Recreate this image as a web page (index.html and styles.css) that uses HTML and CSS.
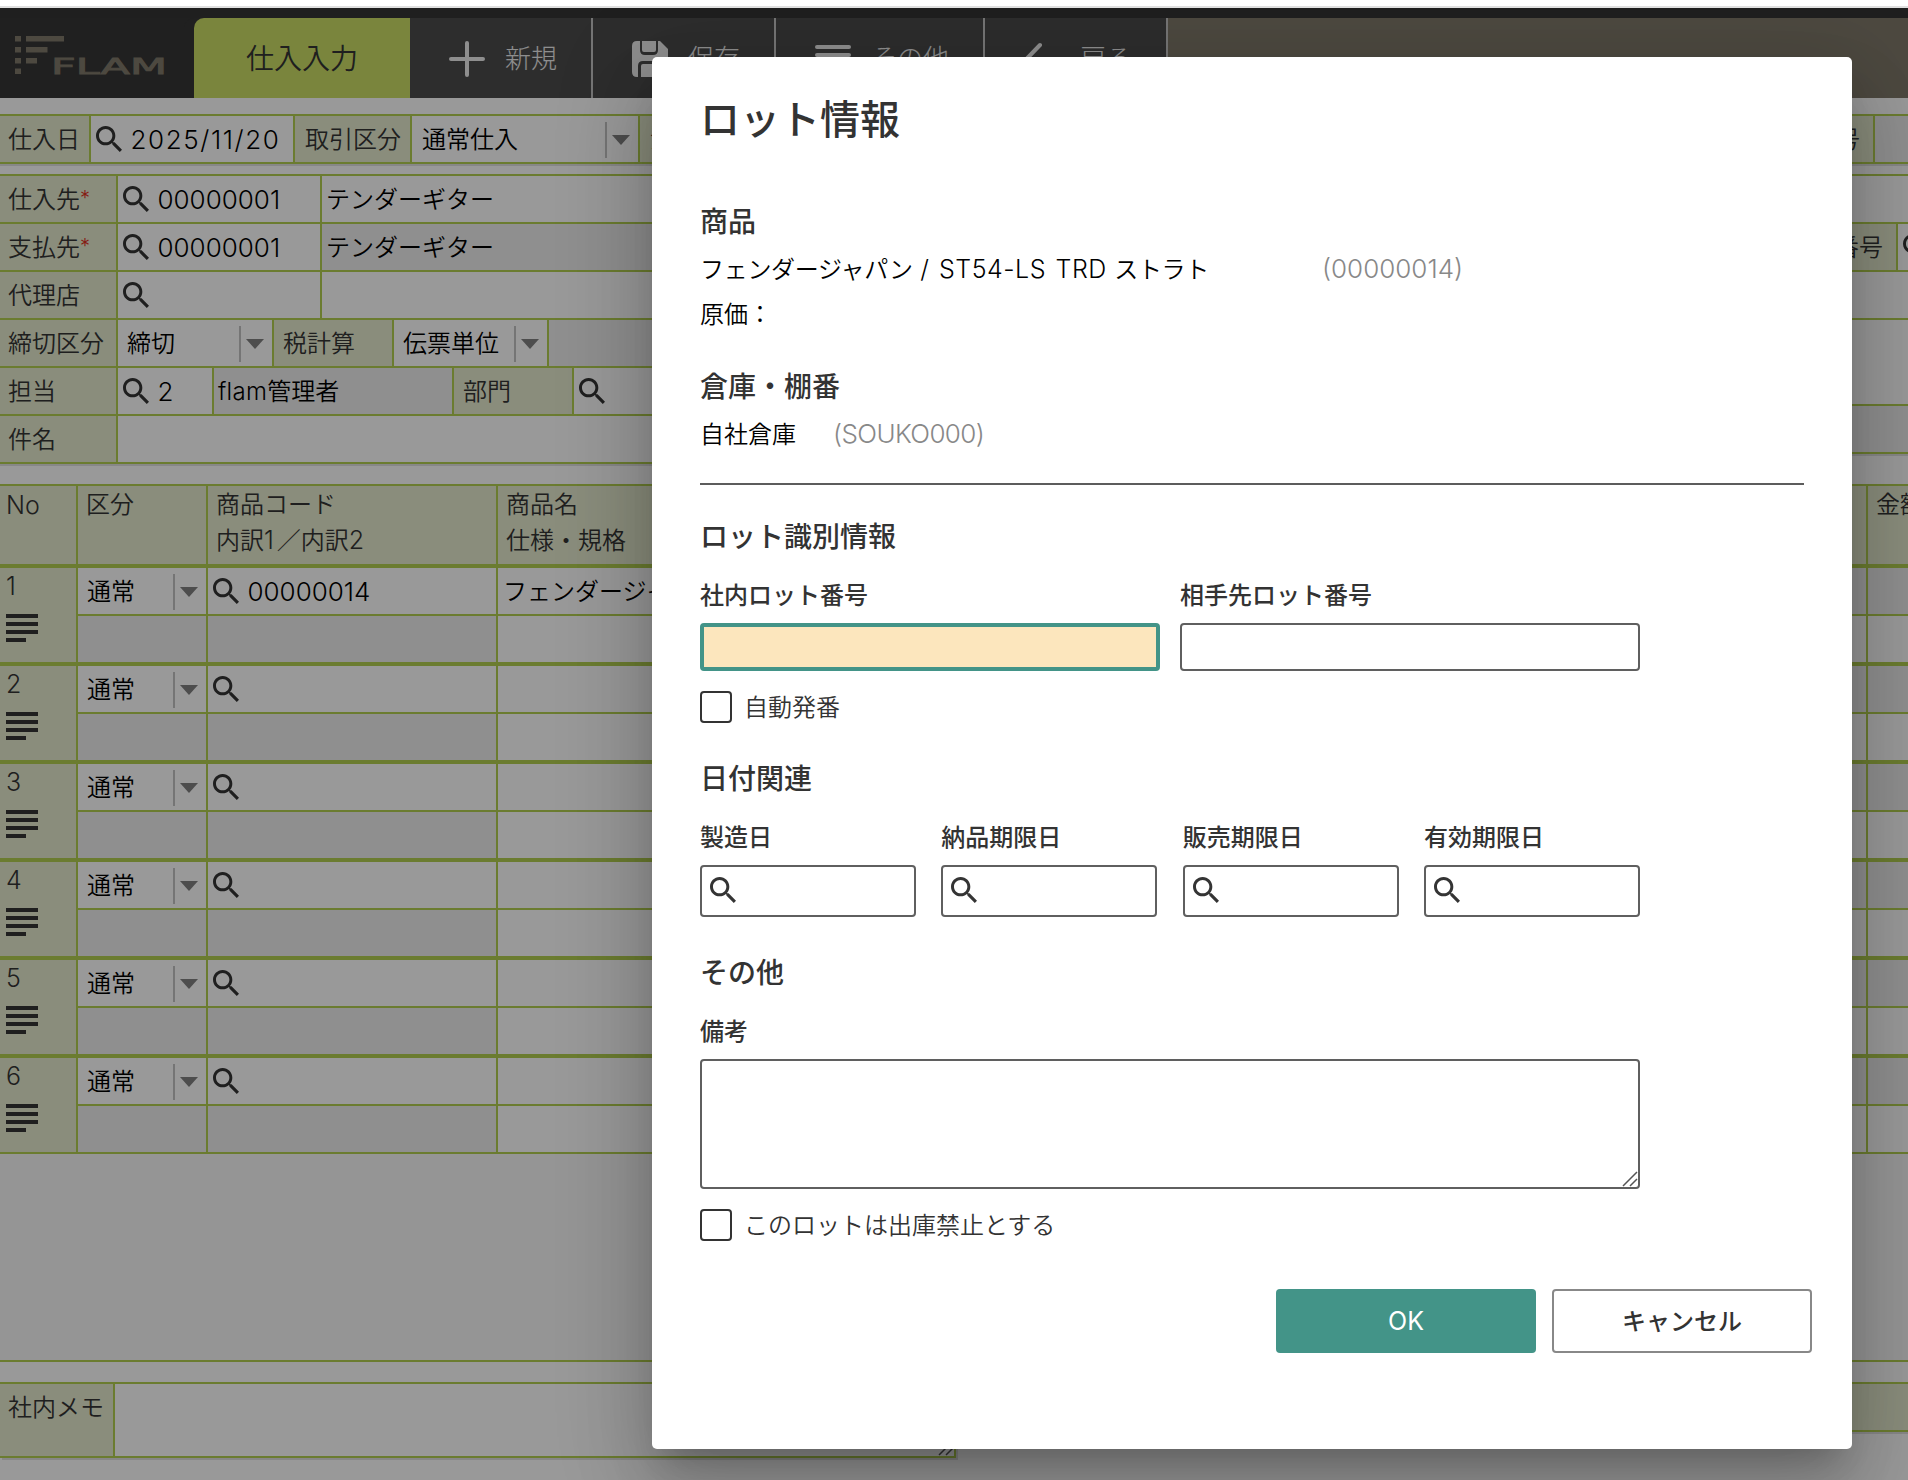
FILE: index.html
```
<!DOCTYPE html>
<html lang="ja">
<head>
	<meta charset="UTF-8">
	<title>仕入入力</title>
	<link rel="stylesheet" href="styles.css">
</head>
<body>
	<svg class="defs" xmlns="http://www.w3.org/2000/svg">
		<symbol id="mag" viewBox="3 3 17.49 17.49"><path d="M15.5 14h-.79l-.28-.27C15.41 12.59 16 11.11 16 9.5 16 5.91 13.09 3 9.5 3S3 5.91 3 9.5 5.91 16 9.5 16c1.61 0 3.09-.59 4.23-1.57l.27.28v.79l5 4.99L20.49 19l-4.99-5zm-6 0C7.01 14 5 11.99 5 9.5S7.01 5 9.5 5 14 7.01 14 9.5 11.99 14 9.5 14z"/></symbol>
		<symbol id="memo" viewBox="0 0 32 28"><path d="M0 0h32v4H0zM0 8h32v4H0zM0 16h32v4H0zM0 24h20v4H0z"/></symbol>
	</svg>
	<div class="app">
		<header class="head">
			<div class="logo">
				<svg width="194" height="80" viewBox="0 18 194 80">
					<path d="M15 36h6v5.500h-6zM15 47h6v5.500h-6zM15 58h6v5.500h-6zM15 68.500h6v5.500h-6zM26 36h38v5.500h-38zM26 47h21.500v5.500h-21.500zM26 58h11v5.500h-11z"/>
					<text x="51" y="74" textLength="116" lengthAdjust="spacingAndGlyphs">FLAM</text>
				</svg>
			</div>
			<div class="tab">仕入入力</div>
			<div class="btn"><svg width="36" height="36" viewBox="0 0 36 36"><path d="M18 2v32M2 18h32"/></svg>新規</div>
			<div class="btn"><svg width="36" height="36" viewBox="0 0 36 36"><path class="fill" d="M5 0h3v9q0 5 5 5h8q5 0 5-5V0h2l8 8v23q0 5-5 5h-1V25q0-5-5-5H11q-5 0-5 5v11H5q-5 0-5-5V5q0-5 5-5z"/><path class="fill" d="M10 0h14v9q0 2-2 2H12q-2 0-2-2zM9 36V25q0-2 2-2h14q2 0 2 2v11z"/></svg>保存</div>
			<div class="btn"><svg width="36" height="36" viewBox="0 0 36 36"><path d="M2 6h32M2 14h32M2 22h32M2 30h32"/></svg>その他</div>
			<div class="btn"><svg width="36" height="36" viewBox="0 0 36 36"><path d="M16 4L2 18.500L16 33M2 18.500h32"/></svg>戻る</div>
		</header>

		<div class="bar">
			<div class="cell lb w91">仕入日</div>
			<div class="cell w204"><svg class="mag"><use href="#mag"/></svg><span class="num ymd">2025/11/20</span></div>
			<div class="cell lb w117">取引区分</div>
			<div class="cell sel w228">通常仕入<i></i></div>
			<div class="cell lb w117">注番</div>
			<div class="cell grow"></div>
			<div class="cell lb w117 r">番号</div>
			<div class="cell off w40"></div>
		</div>

		<div class="form">
			<div class="left">
				<div class="row"><div class="cell lb w118">仕入先<em>*</em></div><div class="cell w204"><svg class="mag"><use href="#mag"/></svg><span class="num">00000001</span></div><div class="cell name grow">テンダーギター</div></div>
				<div class="row"><div class="cell lb w118">支払先<em>*</em></div><div class="cell w204"><svg class="mag"><use href="#mag"/></svg><span class="num">00000001</span></div><div class="cell name off grow">テンダーギター</div></div>
				<div class="row"><div class="cell lb w118">代理店</div><div class="cell w204"><svg class="mag"><use href="#mag"/></svg></div><div class="cell grow"></div></div>
				<div class="row"><div class="cell lb w118">締切区分</div><div class="cell sel w156">締切<i></i></div><div class="cell lb w120">税計算</div><div class="cell sel w155">伝票単位<i></i></div><div class="cell off grow"></div></div>
				<div class="row"><div class="cell lb w118">担当</div><div class="cell w96"><svg class="mag"><use href="#mag"/></svg><span class="num">2</span></div><div class="cell name off w240"><span class="user">flam</span>管理者</div><div class="cell lb w120">部門</div><div class="cell grow"><svg class="mag"><use href="#mag"/></svg></div></div>
				<div class="row"><div class="cell lb w118">件名</div><div class="cell grow"></div></div>
			</div>
			<div class="right">
				<div class="row"></div>
				<div class="row end"><div class="cell lb w117 r">番号</div><div class="cell w40"><svg class="mag"><use href="#mag"/></svg></div></div>
				<div class="row"></div>
				<div class="row tall"></div>
				<div class="row off"></div>
			</div>
		</div>

		<div class="list">
			<div class="grid th">
				<div class="c no">No</div>
				<div class="c">区分</div>
				<div class="c">商品コード<br>内訳<span class="n">1</span>／内訳<span class="n">2</span></div>
				<div class="c">商品名<br>仕様・規格</div>
				<div class="c"></div>
				<div class="c">金額</div>
			</div>
			<div class="grid">
				<div class="c no">1<svg class="memo"><use href="#memo"/></svg></div>
				<div class="c"><div class="up sel">通常<i></i></div><div class="dn off"></div></div>
				<div class="c"><div class="up"><svg class="mag"><use href="#mag"/></svg><span class="num">00000014</span></div><div class="dn off"></div></div>
				<div class="c"><div class="up name">フェンダージャパン</div><div class="dn"></div></div>
				<div class="c"><div class="up off"></div><div class="dn"></div></div>
				<div class="c"><div class="up off"></div><div class="dn"></div></div>
			</div>
			<div class="grid">
				<div class="c no">2<svg class="memo"><use href="#memo"/></svg></div>
				<div class="c"><div class="up sel">通常<i></i></div><div class="dn off"></div></div>
				<div class="c"><div class="up"><svg class="mag"><use href="#mag"/></svg></div><div class="dn off"></div></div>
				<div class="c"><div class="up"></div><div class="dn"></div></div>
				<div class="c"><div class="up off"></div><div class="dn"></div></div>
				<div class="c"><div class="up off"></div><div class="dn"></div></div>
			</div>
			<div class="grid">
				<div class="c no">3<svg class="memo"><use href="#memo"/></svg></div>
				<div class="c"><div class="up sel">通常<i></i></div><div class="dn off"></div></div>
				<div class="c"><div class="up"><svg class="mag"><use href="#mag"/></svg></div><div class="dn off"></div></div>
				<div class="c"><div class="up"></div><div class="dn"></div></div>
				<div class="c"><div class="up off"></div><div class="dn"></div></div>
				<div class="c"><div class="up off"></div><div class="dn"></div></div>
			</div>
			<div class="grid">
				<div class="c no">4<svg class="memo"><use href="#memo"/></svg></div>
				<div class="c"><div class="up sel">通常<i></i></div><div class="dn off"></div></div>
				<div class="c"><div class="up"><svg class="mag"><use href="#mag"/></svg></div><div class="dn off"></div></div>
				<div class="c"><div class="up"></div><div class="dn"></div></div>
				<div class="c"><div class="up off"></div><div class="dn"></div></div>
				<div class="c"><div class="up off"></div><div class="dn"></div></div>
			</div>
			<div class="grid">
				<div class="c no">5<svg class="memo"><use href="#memo"/></svg></div>
				<div class="c"><div class="up sel">通常<i></i></div><div class="dn off"></div></div>
				<div class="c"><div class="up"><svg class="mag"><use href="#mag"/></svg></div><div class="dn off"></div></div>
				<div class="c"><div class="up"></div><div class="dn"></div></div>
				<div class="c"><div class="up off"></div><div class="dn"></div></div>
				<div class="c"><div class="up off"></div><div class="dn"></div></div>
			</div>
			<div class="grid last">
				<div class="c no">6<svg class="memo"><use href="#memo"/></svg></div>
				<div class="c"><div class="up sel">通常<i></i></div><div class="dn off"></div></div>
				<div class="c"><div class="up"><svg class="mag"><use href="#mag"/></svg></div><div class="dn off"></div></div>
				<div class="c"><div class="up"></div><div class="dn"></div></div>
				<div class="c"><div class="up off"></div><div class="dn"></div></div>
				<div class="c"><div class="up off"></div><div class="dn"></div></div>
			</div>
		</div>

		<div class="foot">
			<div class="memobox">
				<div class="lb">社内メモ</div>
				<div class="area"><svg width="16" height="16" viewBox="0 0 16 16"><path d="M1 15L15 1M8 15l7-7"/></svg></div>
			</div>
			<div class="total"></div>
		</div>
	</div>

	<div class="overlay">
		<div class="modal">
			<h2>ロット情報</h2>
			<h3>商品</h3>
			<p><span class="item">フェンダージャパン <span class="model">/ ST54-LS TRD</span> ストラト</span><span class="code">(00000014)</span></p>
			<p>原価：</p>
			<h3 class="wh">倉庫・棚番</h3>
			<p>自社倉庫<span class="code c2">(SOUKO000)</span></p>
			<hr>
			<h3 class="id">ロット識別情報</h3>
			<div class="fields two">
				<label>社内ロット番号<span class="in focus"></span></label>
				<label>相手先ロット番号<span class="in"></span></label>
			</div>
			<div class="check"><b></b>自動発番</div>
			<h3 class="sec">日付関連</h3>
			<div class="fields four">
				<label>製造日<span class="in date"><svg class="mag"><use href="#mag"/></svg></span></label>
				<label>納品期限日<span class="in date"><svg class="mag"><use href="#mag"/></svg></span></label>
				<label>販売期限日<span class="in date"><svg class="mag"><use href="#mag"/></svg></span></label>
				<label>有効期限日<span class="in date"><svg class="mag"><use href="#mag"/></svg></span></label>
			</div>
			<h3 class="sec">その他</h3>
			<div class="fields">
				<label>備考<span class="in note"><svg width="16" height="16" viewBox="0 0 16 16"><path d="M1 15L15 1M8 15l7-7"/></svg></span></label>
			</div>
			<div class="check">
				<b></b>このロットは出庫禁止とする
			</div>
			<div class="btns">
				<button class="ok">OK</button>
				<button>キャンセル</button>
			</div>
		</div>
	</div>
</body>
</html>
```
FILE: styles.css
```
*{box-sizing: border-box;}
html,body{
	margin: 0;
	padding: 0;
	height: 1480px;
	overflow: hidden;
}
body{
	position: relative;
	background: #fff;
	font: 350 24px/1 "Inter","Noto Sans CJK JP",sans-serif;
	color: #000;
}
.defs{position: absolute;width: 0;height: 0;}
.app{
	margin-top: 6px;
	border-top: 2px solid #e0e0e0;
	height: 1474px;
	overflow: hidden;
}

/* header */
.head{
	display: flex;
	height: 90px;
	border-top: 10px solid #343434;
	background: #807a6c;
}
.logo{width: 194px;background: #363636;fill: #807a6c;}
.logo svg{display: block;}
.logo text{font: 400 22px "DejaVu Sans",sans-serif;stroke: #807a6c;stroke-width: .8;}
.tab{
	width: 216px;
	border-top-left-radius: 10px;
	background: #cbde67;
	box-shadow: -10px 0 0 #363636;
	color: #343434;
	font-size: 28px;
	line-height: 82px;
	text-align: center;
}
.btn{
	display: flex;
	align-items: center;
	gap: 20px;
	padding: 1px 34px 0 39px;
	border-right: 2px solid #c4c4c4;
	background: #4b4b4b;
	color: #ededed;
	font-size: 26px;
	font-weight: 300;
}
.btn svg{
	fill: none;
	stroke: #ededed;
	stroke-width: 4;
	stroke-linecap: round;
	stroke-linejoin: round;
}
.btn .fill{fill: #ededed;stroke: none;}

/* form */
.bar,.left,.right{
	border-top: 2px solid #b2cf50;
	box-shadow: 0 2px 0 #e2e2e2;
}
.bar{
	display: flex;
	height: 50px;
	margin-top: 16px;
	border-bottom: 2px solid #b2cf50;
}
.form{display: flex;align-items: flex-start;margin-top: 10px;}
.left{width: 1000px;}
.right{flex: 1;}
.row{display: flex;height: 48px;border-bottom: 2px solid #b2cf50;}
.row.tall{height: 86px;}
.row.end{justify-content: flex-end;}
.cell{
	display: flex;
	align-items: center;
	flex: none;
	border-right: 2px solid #b2cf50;
	padding-top: 1px;
	white-space: nowrap;
}
.lb{
	padding-left: 8px;
	background: #e6ebcf;
	color: #343434;
}
.cell.r{justify-content: flex-end;padding-right: 13px;}
.cell.grow{flex: 1;}
.off{background: #eee;}
.name{padding-left: 4px;}
.lb em{
	align-self: flex-start;
	margin-top: 11px;
	color: #e0301e;
	font-size: 20px;
	font-style: normal;
}
.w40{width: 33px;}
.cell.w40:last-child{border-right: 0;}
.row .w40{width: 10px;overflow: hidden;}
.w91{width: 91px;}
.w96{width: 96px;}
.w117{width: 117px;}
.w118{width: 118px;}
.w120{width: 120px;}
.w155{width: 155px;}
.w156{width: 156px;}
.w204{width: 204px;}
.w228{width: 228px;}
.w240{width: 240px;}
.bar .w117{padding-left: 10px;}
.cell.sel.w228{padding-left: 10px;}
.w120.lb{padding-left: 9px;}
.mag{
	flex: none;
	width: 26px;
	height: 26px;
	margin: -2px 0 0 4.500px;
	fill: #343434;
}
.num{
	margin-left: 9px;
	font-size: 26px;
	font-weight: 300;
}
.ymd{letter-spacing: 1.6px;}
.user{letter-spacing: .3px;}
.sel{padding-left: 9px;}
.sel i{
	display: flex;
	align-items: center;
	width: 33px;
	height: 36px;
	margin-left: auto;
	border-left: 2px solid #c4c4c4;
}
.sel i:after{
	content: "";
	margin-left: 5px;
	border: 9.5px solid transparent;
	border-top: 10px solid #808080;
	border-bottom: 0;
}

/* detail list */
.list{
	height: 878px;
	margin-top: 20px;
	border-top: 2px solid #b2cf50;
	border-bottom: 2px solid #b2cf50;
	background: #f8f8f8;
}
.grid{
	display: grid;
	grid-template-columns: 78px 130px 290px 502px 868px 1fr;
	height: 98px;
	border-bottom: 4px solid #b2cf50;
	background: #fff;
}
.grid.last{height: 96px;border-bottom-width: 2px;}
.c{border-right: 2px solid #b2cf50;overflow: hidden;white-space: nowrap;}
.c:last-child{border-right: 0;}
.th{height: 82px;}
.th .c{padding: 1px 0 0 8px;background: #e6ebcf;color: #343434;line-height: 36px;}
.th .n{letter-spacing: 3px;font-size: 25px;font-weight: 300;line-height: 1;}
.grid .no{
	padding-left: 6px;
	background: #e6ebcf;
	color: #343434;
	font-size: 25px;
	font-weight: 300;
	line-height: 36px;
}
.memo{display: block;width: 32px;height: 28px;margin-top: 10px;fill: #343434;}
.up{
	display: flex;
	align-items: center;
	height: 48px;
	padding-top: 1px;
	border-bottom: 2px solid #b2cf50;
}
.up.name{padding-left: 5px;}
.dn{height: 46px;}

/* footer */
.foot{display: flex;justify-content: space-between;align-items: flex-start;margin-top: 20px;}
.memobox{
	display: flex;
	width: 956px;
	height: 76px;
	border: 2px solid #b2cf50;
	border-left: 0;
	box-shadow: 2px 2px 0 #e2e2e2;
}
.memobox .lb{width: 115px;border-right: 2px solid #b2cf50;line-height: 47px;}
.area{display: flex;flex: 1;align-items: flex-end;justify-content: flex-end;}
.area svg,.note svg{fill: none;stroke: #555;stroke-width: 1.5;}
.total{
	width: 800px;
	height: 50px;
	border-top: 2px solid #b2cf50;
	border-bottom: 2px solid #b2cf50;
	background: #e6ebcf;
	box-shadow: 0 2px 0 #e2e2e2;
}

/* dialog */
.overlay{
	position: absolute;
	top: 8px;
	left: 0;
	width: 1908px;
	height: 1472px;
	background: rgba(0,0,0,.4);
	overflow: hidden;
}
.modal{
	position: absolute;
	left: 652px;
	top: 49px;
	width: 1200px;
	height: 1392px;
	padding: 34px 48px 0;
	border-radius: 5px;
	background: #fff;
	box-shadow: 0 22px 30px -14px rgba(0,0,0,.2),0 48px 76px 6px rgba(0,0,0,.14),0 18px 92px 16px rgba(0,0,0,.12);
}
h2,h3,p{margin: 0;}
h2{color: #333;font-size: 40px;font-weight: 500;line-height: 58px;}
h3{margin-bottom: 4px;color: #333;font-size: 28px;font-weight: 500;line-height: 40px;}
h2 + h3{margin-top: 53px;}
.wh{margin-top: 29px;}
.modal p{height: 46px;line-height: 46px;white-space: nowrap;}
.item{display: inline-block;width: 622px;letter-spacing: -.3px;}
.model{margin: 0 1px;font-size: 25px;font-weight: 300;letter-spacing: .5px;word-spacing: 2px;}
.code{color: #888;font-weight: 300;font-size: 26px;}
.c2{margin-left: 37px;letter-spacing: -.6px;}
hr{height: 2px;margin: 26px 0 32px;border: 0;background: #5c5c5c;}
h3.id,h3.sec{margin-bottom: 23px;}
h3.sec{margin-top: 36px;}
.fields{display: grid;width: 940px;}
.two{grid-template-columns: 1fr 1fr;column-gap: 20px;}
.four{grid-template-columns: repeat(4,216px);justify-content: space-between;}
label{color: #333;font-weight: 500;line-height: 32px;}
.in{
	display: flex;
	align-items: center;
	height: 48px;
	margin-top: 11px;
	border: 2px solid #5f5f5f;
	border-radius: 4px;
	background: #fff;
}
.focus{border: 4px solid #439488;background: #fce6bd;}
.date{height: 52px;}
.date .mag{margin-left: 8px;}
.note{height: 130px;align-items: flex-end;justify-content: flex-end;}
.check{
	display: flex;
	align-items: center;
	height: 32px;
	margin-top: 20px;
	padding-top: 1px;
	color: #333;
}
.check b{
	width: 32px;
	height: 32px;
	margin: -1px 12px 0 0;
	border: 2px solid #333;
	border-radius: 4px;
}
.btns{display: flex;justify-content: flex-end;gap: 16px;margin: 48px -8px 0 0;}
button{
	width: 260px;
	height: 64px;
	padding: 0 0 3px;
	border: 2px solid #888;
	border-radius: 4px;
	background: #fff;
	color: #333;
	font: 500 24px "Inter","Noto Sans CJK JP",sans-serif;
}
button.ok{padding: 0;border: 0;background: #439488;color: #fff;font-size: 25px;font-weight: 400;}
```
